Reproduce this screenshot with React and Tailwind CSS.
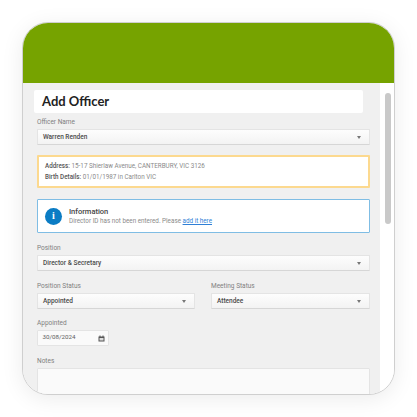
function Caret() {
  return <span className="w-0 h-0 border-x-[2.5px] border-x-transparent border-t-[3px] border-t-[#777] shrink-0" />;
}

function Label({ children }) {
  return <div className="text-[6.5px] leading-[8px] text-[#808080] mb-[3px]">{children}</div>;
}

function Select({ value }) {
  return (
    <div className="h-[16px] flex items-center justify-between pl-[5px] pr-[8px] pt-[1px] bg-gradient-to-b from-[#fdfdfd] to-[#f3f3f3] border border-[#e4e4e4] border-b-[#d6d6d6] rounded-[1px] text-[6.5px] font-medium text-[#4a4a4a]">
      <span>{value}</span>
      <Caret />
    </div>
  );
}

function CalendarIcon() {
  return (
    <svg width="7" height="7" viewBox="0 0 14 14" className="shrink-0">
      <path d="M1 3h12v10H1z M3 1h2v3H3z M9 1h2v3H9z" fill="#555" />
      <path d="M3 6h8v5H3z" fill="#ddd" />
    </svg>
  );
}

export default function App() {
  return (
    <div className="w-[417px] h-[417px] bg-white p-[22px] font-['Roboto',sans-serif]">
      <div className="w-[373px] h-[373px] rounded-[26px] border border-[#cfcfcf] overflow-hidden shadow-[0_4px_22px_rgba(0,0,0,0.08)] flex flex-col bg-white">
        <div className="h-[60px] bg-[#76a300] shrink-0" />
        <div className="flex-1 flex min-h-0">
          <div className="w-[357px] bg-[#f0f0f0] pl-[11px] pt-[7px] overflow-hidden">
            <div className="h-[23px] w-[329px] bg-white rounded-[2px] flex items-center pl-[8px] text-[13px] font-['Lato',sans-serif] font-bold text-[#222]">
              Add Officer
            </div>

            <div className="pl-[3px] w-[336px]">
              <div className="mt-[5px]">
                <Label>Officer Name</Label>
                <Select value="Warren Renden" />
              </div>

              <div className="mt-[10px] h-[33px] bg-white border-[2px] border-[#fcd98f] rounded-[1px] pl-[6px] flex flex-col justify-center gap-[3px] text-[6.3px] leading-[8px] text-[#8a8a8a]">
                <div><span className="font-medium text-[#555]">Address:</span> 15-17 Shierlaw Avenue, CANTERBURY, VIC 3126</div>
                <div><span className="font-medium text-[#555]">Birth Details:</span> 01/01/1987 in Carlton VIC</div>
              </div>

              <div className="mt-[11px] h-[34px] bg-white border border-[#7fbde4] rounded-[1px] pl-[7px] flex items-center gap-[7px]">
                <span className="w-[17px] h-[17px] rounded-full bg-[#0b7cc4] flex items-center justify-center shrink-0">
                  <span className="text-white text-[10px] leading-none font-bold font-['Liberation_Serif',serif]">i</span>
                </span>
                <div>
                  <div className="text-[7.5px] leading-[11px] font-medium text-[#444]">Information</div>
                  <div className="text-[6.3px] leading-[9px] text-[#8a8a8a]">
                    Director ID has not been entered. Please <span className="text-[#2f7fd6] underline">add it here</span>
                  </div>
                </div>
              </div>

              <div className="mt-[11px]">
                <Label>Position</Label>
                <Select value="Director & Secretary" />
              </div>

              <div className="mt-[11px] grid grid-cols-[158px_159px] gap-x-[16px]">
                <div>
                  <Label>Position Status</Label>
                  <Select value="Appointed" />
                </div>
                <div>
                  <Label>Meeting Status</Label>
                  <Select value="Attendee" />
                </div>
              </div>

              <div className="mt-[10px]">
                <Label>Appointed</Label>
                <div className="w-[72px] h-[16px] flex items-center justify-between pl-[4.5px] pr-[3px] bg-[#fafafa] border border-[#e4e4e4] rounded-[1px] text-[6.2px] text-[#606060]">
                  <span>30/08/2024</span>
                  <CalendarIcon />
                </div>
              </div>

              <div className="mt-[11px]">
                <Label>Notes</Label>
                <div className="h-[40px] bg-[#fafafa] border border-[#e4e4e4] rounded-[1px]" />
              </div>
            </div>
          </div>

          <div className="flex-1 bg-white pt-[10px] pl-[5px]">
            <div className="w-[5.5px] h-[131px] rounded-full bg-[#c9c9c9]" />
          </div>
        </div>
      </div>
    </div>
  );
}
